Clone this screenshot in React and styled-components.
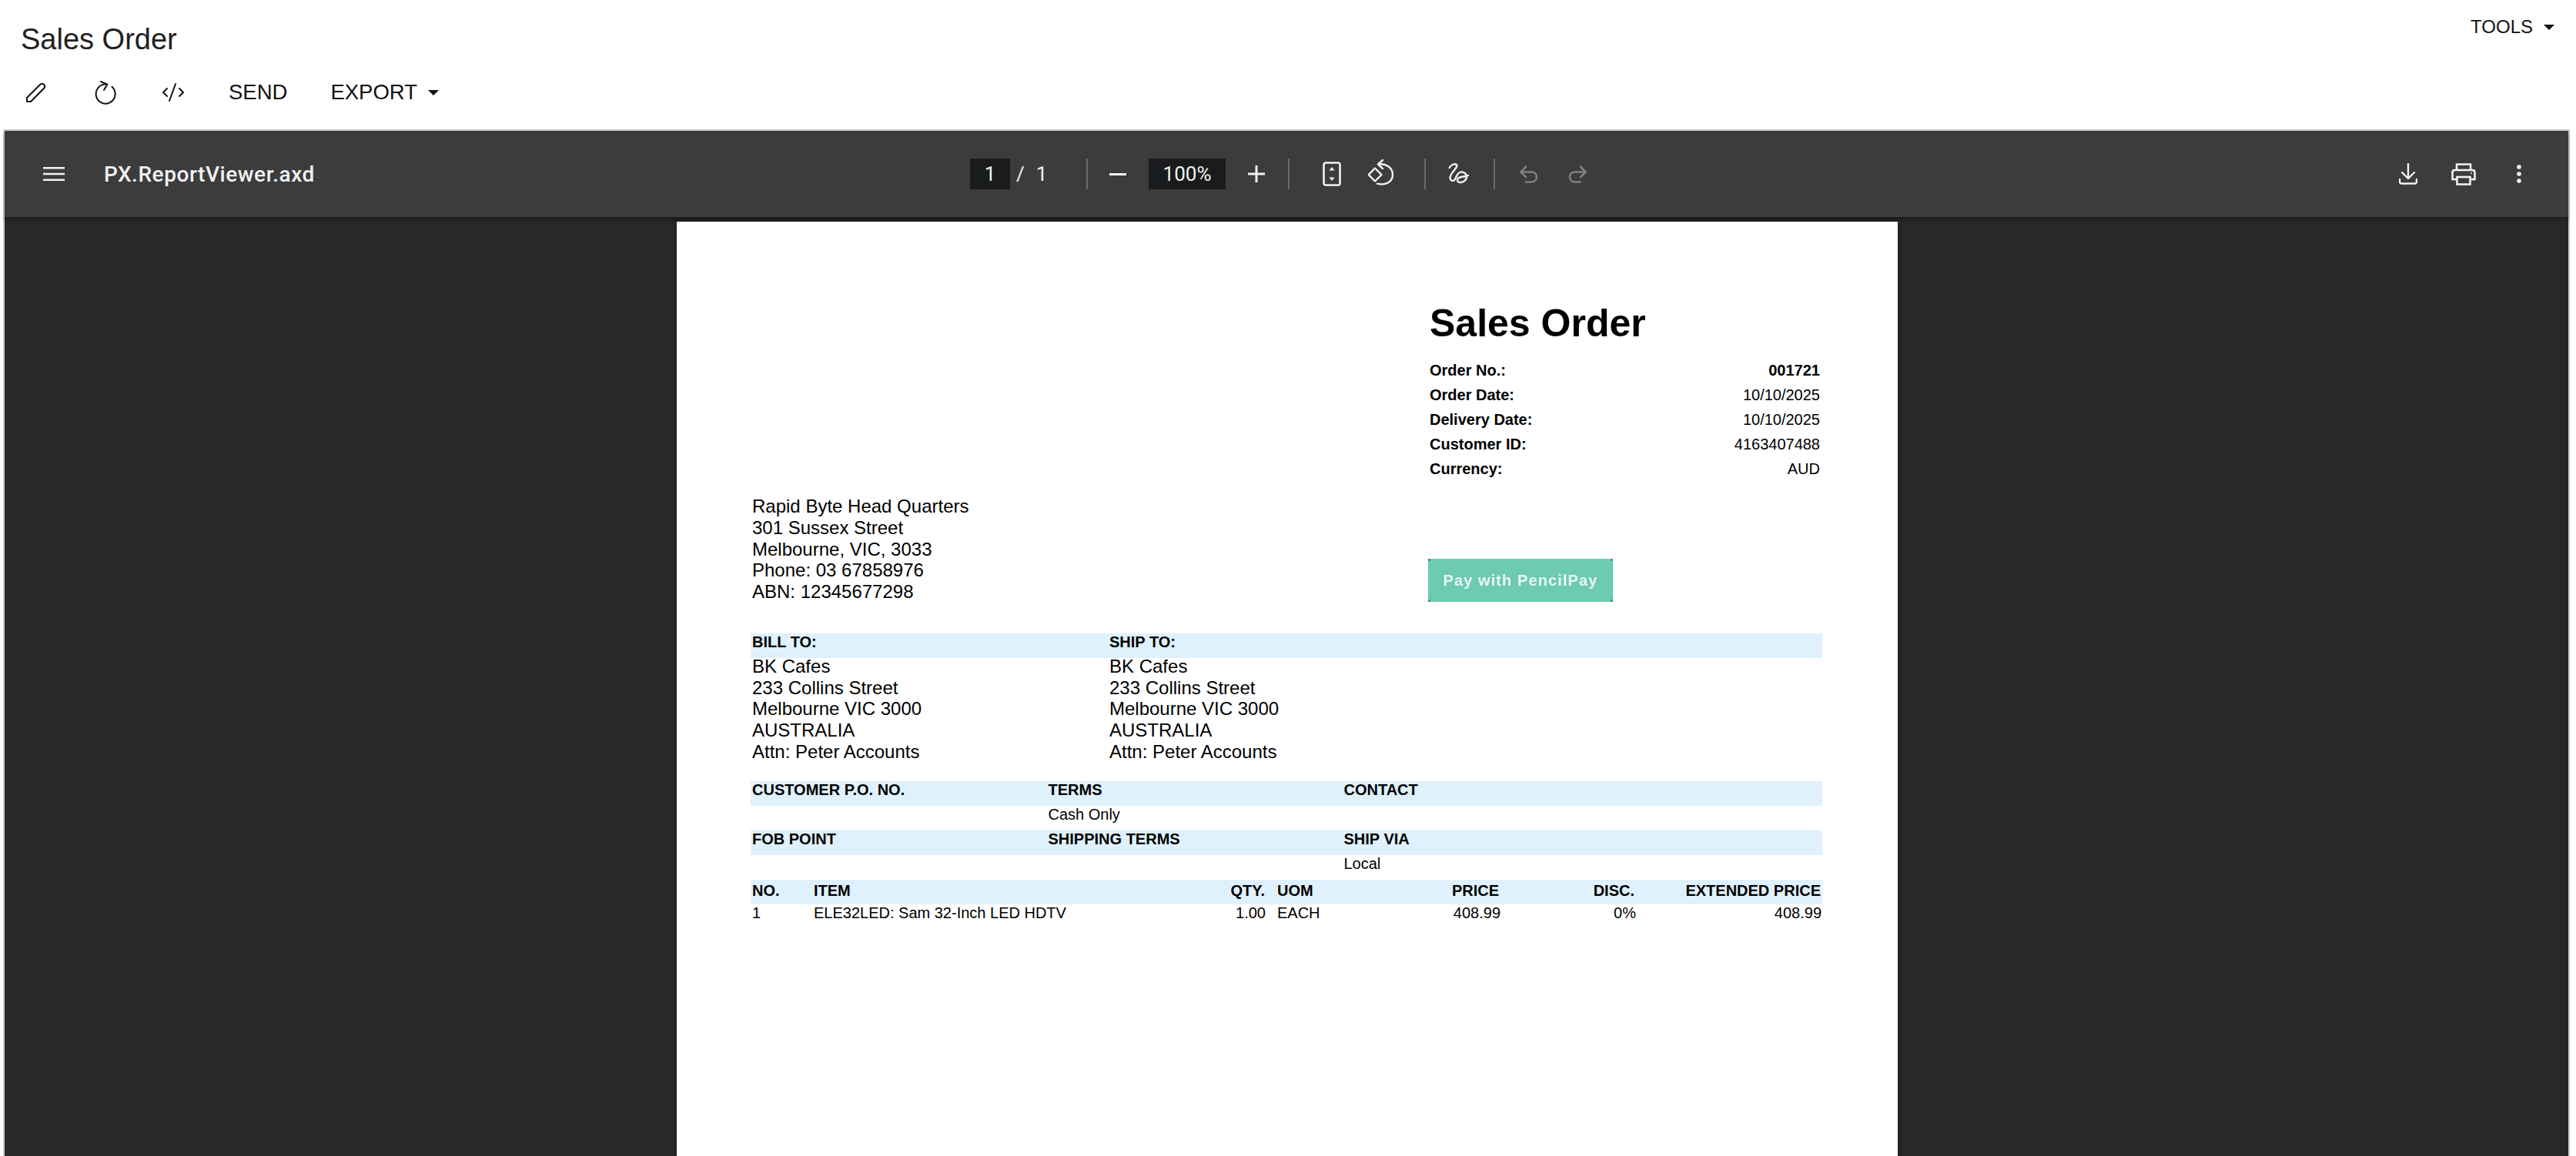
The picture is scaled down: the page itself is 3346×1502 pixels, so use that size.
import React from 'react'
import styled, { createGlobalStyle } from 'styled-components'

const Global = createGlobalStyle`
html, body {
    margin: 0;
    padding: 0;
    background: #fff;
    overflow: hidden;
}
body {
    font-family: "Liberation Sans", Arial, sans-serif;
}
`

const Screen = styled.div`
display: flex;
flex-direction: column;
width: 3346px;
height: 1502px;
overflow: hidden;
`

const Header = styled.div`
display: flex;
flex-direction: column;
height: 168px;
padding: 0 28px 0 27px;
box-sizing: border-box;
flex: none;
`

const TitleRow = styled.div`
display: flex;
justify-content: space-between;
align-items: flex-start;
height: 92px;
`

const Title = styled.h1`
margin: 29px 0 0 0;
font-size: 38px;
line-height: 44px;
font-weight: 400;
color: #212121;
`

const ToolsButton = styled.div`
display: flex;
align-items: center;
gap: 14px;
margin-top: 21px;
font-size: 24px;
line-height: 28px;
color: #111;
`

const Caret = styled.span`
width: 0;
height: 0;
border-left: 7px solid transparent;
border-right: 7px solid transparent;
border-top: 7px solid #111;
`

const ActionBar = styled.div`
display: flex;
align-items: center;
height: 56px;
padding-left: 6px;
color: #111;
`

const ActionIcon = styled.span`
display: flex;
width: ${p => p.$w}px;
svg { display: block; }
`

const ActionText = styled.div`
display: flex;
align-items: center;
gap: 14px;
font-size: 27.5px;
margin-right: ${p => p.$gap || 0}px;
`

const Viewer = styled.div`
flex: 1;
display: flex;
flex-direction: column;
min-height: 0;
margin: 0 8px 0 4px;
border: 2px solid #ccc;
border-bottom: none;
background: #282828;
`

const ViewerBar = styled.div`
position: relative;
display: grid;
grid-template-columns: 1254px auto 1fr;
align-items: center;
height: 112px;
flex: none;
background: #3c3c3c;
color: #f1f1f1;
font-family: Roboto, sans-serif;
box-shadow: 0 3px 4px rgba(0,0,0,.35);
`

const BarLeft = styled.div`
display: flex;
align-items: center;
padding-left: 50px;
gap: 51px;
`

const FileName = styled.div`
font-size: 28px;
font-weight: 500;
letter-spacing: 0.55px;
`

const BarCenter = styled.div`
display: flex;
align-items: center;
height: 40px;
`

const BarRight = styled.div`
display: flex;
align-items: center;
justify-content: flex-end;
gap: 44px;
padding-right: 61px;
`

const MoreDots = styled.svg`
margin-left: 9px;
`

const NumberBox = styled.div`
display: flex;
align-items: center;
justify-content: center;
width: ${p => p.$w}px;
height: 40px;
background: #191b1c;
font-size: 26px;
`

const PageCount = styled.span`
display: flex;
gap: 15px;
width: 99px;
padding-left: 8px;
box-sizing: border-box;
font-size: 26px;
`

const Sep = styled.div`
width: 2px;
height: 40px;
background: #6b6b6b;
`

const BarIcon = styled.span`
display: flex;
margin: 0 ${p => p.$r || 0}px 0 ${p => p.$l || 0}px;
color: ${p => (p.$dim ? '#7f7f7f' : '#f1f1f1')};
`

const Stage = styled.div`
flex: 1;
display: flex;
justify-content: center;
padding-top: 6px;
min-height: 0;
overflow: hidden;
`

const Sheet = styled.div`
width: 1586px;
height: 2100px;
flex: none;
margin-left: 2px;
padding: 102px 98px 0 96px;
box-sizing: border-box;
background: #fff;
color: #000;
font-family: "Liberation Sans", Arial, sans-serif;
box-shadow: 0 0 8px rgba(0,0,0,.35);
`

const TopBlock = styled.div`
display: flex;
justify-content: space-between;
align-items: flex-start;
margin-bottom: 40px;
`

const CompanyAddress = styled.div`
margin-top: 254px;
padding-left: 2px;
`

const OrderBox = styled.div`
width: 506px;
margin-right: 3px;
display: flex;
flex-direction: column;
`

const DocTitle = styled.div`
font-size: 50px;
line-height: 60px;
font-weight: 700;
margin-bottom: 15px;
margin-left: -1px;
`

const MetaRow = styled.div`
display: flex;
justify-content: space-between;
font-size: 20px;
line-height: 32px;
margin-left: -1px;
font-weight: ${p => (p.$bold ? 700 : 400)};
b { font-weight: 700; }
`

const Address = styled.div`
font-size: 24px;
line-height: 27.75px;
white-space: pre-line;
`

const PayButton = styled.div`
display: flex;
align-items: center;
justify-content: center;
width: 240px;
height: 56px;
margin: 101px 0 0 -3px;
background-color: #6dcbb1;
background-image:
    linear-gradient(#5d8a7d, #5d8a7d),
    linear-gradient(#5d8a7d, #5d8a7d),
    linear-gradient(#5d8a7d, #5d8a7d),
    linear-gradient(#5d8a7d, #5d8a7d);
background-size: 3px 3px;
background-repeat: no-repeat;
background-position: 0 0, 100% 0, 0 100%, 100% 100%;
color: #e9f7f2;
font-size: 20px;
font-weight: 700;
letter-spacing: 1.1px;
span { filter: blur(.5px); }
`

const Band = styled.div`
display: grid;
grid-template-columns: ${p => p.$cols};
height: 32px;
background: #dff1fc;
padding: 0 2px;
font-size: 20px;
line-height: ${p => p.$lh || 22}px;
font-weight: 700;
`

const Plain = styled.div`
display: grid;
grid-template-columns: ${p => p.$cols};
height: 32px;
padding: 0 1px 0 2px;
font-size: 20px;
line-height: ${p => p.$lh || 22}px;
`

const Cell = styled.div`
text-align: ${p => (p.$right ? 'right' : 'left')};
white-space: nowrap;
`

const AddressRow = styled.div`
display: grid;
grid-template-columns: 464px 1fr;
height: 163px;
margin-top: -3px;
padding-left: 2px;
`

const infoCols = '384.5px 384px 1fr'
const itemCols = '80px 420px 166px 16px 100px 188px 176px 1fr'
const itemValueCols = '80px 420px 167px 15px 100px 190px 176px 1fr'

const Stroke = ({ w = 24, h = 24, sw = 1.6, children }) => (
    <svg width={w} height={h} viewBox={`0 0 ${w} ${h}`} fill="none" stroke="currentColor" strokeWidth={sw} strokeLinecap="round" strokeLinejoin="round">
        {children}
    </svg>
)

const shipLines = 'BK Cafes\n233 Collins Street\nMelbourne VIC 3000\nAUSTRALIA\nAttn: Peter Accounts'

export default function App() {
    return (
        <Screen>
            <Global />
            <Header>
                <TitleRow>
                    <Title>Sales Order</Title>
                    <ToolsButton>TOOLS<Caret /></ToolsButton>
                </TitleRow>
                <ActionBar>
                    <ActionIcon $w={90}>
                        <Stroke w={28} h={28} sw={2}>
                            <path d="M2 26v-5L19 4c1.500-1.500 3.500-1.500 5-.3 1.500 1.300 1.500 3.300.3 4.800L7 26z" />
                        </Stroke>
                    </ActionIcon>
                    <ActionIcon $w={87}>
                        <Stroke w={28} h={32} sw={2}>
                            <path d="M15 5.600A12.500 12.500 0 1 0 22.500 8.800" />
                            <path d="M8 2l8.500 3.600L12 13" />
                        </Stroke>
                    </ActionIcon>
                    <ActionIcon $w={87}>
                        <Stroke w={30} h={26} sw={2}>
                            <path d="M7 8l-5 5 5 5" />
                            <path d="M23 8l5 5-5 5" />
                            <path d="M18 2l-8 22" />
                        </Stroke>
                    </ActionIcon>
                    <ActionText $gap={56}>SEND</ActionText>
                    <ActionText>EXPORT<Caret /></ActionText>
                </ActionBar>
            </Header>
            <Viewer>
                <ViewerBar>
                    <BarLeft>
                        <svg width="28" height="18" viewBox="0 0 28 18" fill="#f1f1f1"><rect width="28" height="2.500" /><rect y="7.750" width="28" height="2.500" /><rect y="15.500" width="28" height="2.500" /></svg>
                        <FileName>PX.ReportViewer.axd</FileName>
                    </BarLeft>
                    <BarCenter>
                        <NumberBox $w={52}>1</NumberBox>
                        <PageCount><span>/</span><span>1</span></PageCount>
                        <Sep />
                        <BarIcon $l={28} $r={29}><svg width="22" height="3" viewBox="0 0 22 3" fill="currentColor"><rect width="22" height="3" /></svg></BarIcon>
                        <NumberBox $w={100}>100%</NumberBox>
                        <BarIcon $l={29} $r={30}><svg width="22" height="22" viewBox="0 0 22 22" fill="currentColor"><rect y="9.500" width="22" height="3" /><rect x="9.500" width="3" height="22" /></svg></BarIcon>
                        <Sep />
                        <BarIcon $l={43} $r={35}>
                            <svg width="24" height="32" viewBox="0 0 24 32" fill="none">
                                <rect x="1.500" y="1.500" width="21" height="29" rx="2.500" stroke="currentColor" strokeWidth="2.600" />
                                <path d="M12 7l3.500 4.500h-7zM12 25l-3.500-4.500h7z" fill="currentColor" />
                            </svg>
                        </BarIcon>
                        <BarIcon $r={39}>
                            <Stroke w={34} h={38} sw={2.400}>
                                <path d="M9 11.500l8.500 8.500L9 28.500.8 20z" />
                                <path d="M14 6.500c9-1.500 18 4.500 18 13.500 0 9-9 14.500-20 11.700" />
                                <path d="M19 1l-6 5.500 6 5.500" />
                            </Stroke>
                        </BarIcon>
                        <Sep />
                        <BarIcon $l={28} $r={30}>
                            <Stroke w={30} h={32} sw={2.400}>
                                <path d="M2.700 8c2-4 7-6 9.300-4 3 3-9 11-8.500 17 .3 4 4 5 6 2.500 2-3 3-8 6.500-9.500 4-1.500 9 1 9 5.500 0 5-5 8-9 7.500-3-.5-4-3.500-2-5.500 3-2.500 10-2 13-3.500" />
                            </Stroke>
                        </BarIcon>
                        <Sep />
                        <BarIcon $dim $l={32} $r={39}>
                            <Stroke w={24} h={23} sw={2.600}>
                                <path d="M8 1.500L1.500 8.500 8 15" />
                                <path d="M1.500 8.500H15c4 0 7 2.500 7 6.500s-3 6.500-7 6.500H8" />
                            </Stroke>
                        </BarIcon>
                        <BarIcon $dim>
                            <Stroke w={24} h={23} sw={2.600}>
                                <path d="M16 1.500l6.500 7L16 15" />
                                <path d="M22.500 8.500H9c-4 0-7 2.500-7 6.500s3 6.500 7 6.500h7" />
                            </Stroke>
                        </BarIcon>
                    </BarCenter>
                    <BarRight>
                        <Stroke w={24} h={28} sw={2.400}>
                            <path d="M12 1v18M4 12l8 8 8-8" />
                            <path d="M1 21v3c0 1.500 1 2.500 2.500 2.500h17c1.500 0 2.500-1 2.500-2.500v-3" />
                        </Stroke>
                        <svg width="32" height="29" viewBox="0 0 32 29" fill="none" stroke="currentColor" strokeWidth="2.600">
                            <path d="M7 9V1.500h18V9" />
                            <path d="M7 21H1.500V12c0-2 1-3 3-3h23c2 0 3 1 3 3v9H25" />
                            <rect x="7.500" y="18" width="17" height="9.500" />
                            <circle cx="26" cy="13" r=".6" fill="currentColor" strokeWidth="1" />
                        </svg>
                        <MoreDots width="6" height="24" viewBox="0 0 6 24" fill="currentColor"><circle cx="3" cy="3" r="2.800" /><circle cx="3" cy="12" r="2.800" /><circle cx="3" cy="21" r="2.800" /></MoreDots>
                    </BarRight>
                </ViewerBar>
                <Stage>
                    <Sheet>
                        <TopBlock>
                            <CompanyAddress>
                                <Address>{'Rapid Byte Head Quarters\n301 Sussex Street\nMelbourne, VIC, 3033\nPhone: 03 67858976\nABN: 12345677298'}</Address>
                            </CompanyAddress>
                            <OrderBox>
                                <DocTitle>Sales Order</DocTitle>
                                <MetaRow $bold><span>Order No.:</span><span>001721</span></MetaRow>
                                <MetaRow><b>Order Date:</b><span>10/10/2025</span></MetaRow>
                                <MetaRow><b>Delivery Date:</b><span>10/10/2025</span></MetaRow>
                                <MetaRow><b>Customer ID:</b><span>4163407488</span></MetaRow>
                                <MetaRow><b>Currency:</b><span>AUD</span></MetaRow>
                                <PayButton><span>Pay with PencilPay</span></PayButton>
                            </OrderBox>
                        </TopBlock>
                        <Band $cols="464px 1fr"><Cell>BILL TO:</Cell><Cell>SHIP TO:</Cell></Band>
                        <AddressRow>
                            <Address>{shipLines}</Address>
                            <Address>{shipLines}</Address>
                        </AddressRow>
                        <Band $cols={infoCols}><Cell>CUSTOMER P.O. NO.</Cell><Cell>TERMS</Cell><Cell>CONTACT</Cell></Band>
                        <Plain $cols={infoCols}><Cell /><Cell>Cash Only</Cell><Cell /></Plain>
                        <Band $cols={infoCols}><Cell>FOB POINT</Cell><Cell>SHIPPING TERMS</Cell><Cell>SHIP VIA</Cell></Band>
                        <Plain $cols={infoCols}><Cell /><Cell /><Cell>Local</Cell></Plain>
                        <Band $cols={itemCols} $lh={29}>
                            <Cell>NO.</Cell><Cell>ITEM</Cell><Cell $right>QTY.</Cell><Cell /><Cell>UOM</Cell>
                            <Cell $right>PRICE</Cell><Cell $right>DISC.</Cell><Cell $right>EXTENDED PRICE</Cell>
                        </Band>
                        <Plain $cols={itemValueCols}>
                            <Cell>1</Cell><Cell>ELE32LED: Sam 32-Inch LED HDTV</Cell><Cell $right>1.00</Cell><Cell /><Cell>EACH</Cell>
                            <Cell $right>408.99</Cell><Cell $right>0%</Cell><Cell $right>408.99</Cell>
                        </Plain>
                    </Sheet>
                </Stage>
            </Viewer>
        </Screen>
    )
}
